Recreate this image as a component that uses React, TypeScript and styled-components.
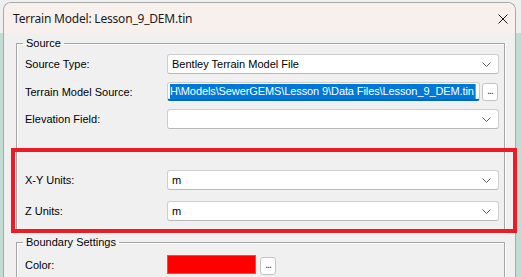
import React from 'react';
import styled, {createGlobalStyle} from 'styled-components';

const GlobalStyle = createGlobalStyle`
  html, body {
    margin: 0;
    padding: 0;
  }
  body {
    width: 521px;
    height: 277px;
    overflow: hidden;
    background: linear-gradient(to bottom, #eef0ef 0px, #eef0ef 33px, #c3dcd3 33px, #c3dcd3 100%);
    font-family: "Liberation Sans", Arial, sans-serif;
    font-size: 11px;
    color: #000;
  }
`

const Page = styled.div`
  position: relative;
  width: 521px;
  height: 277px;
  padding: 2px 0 0 3px;
  box-sizing: border-box;
  overflow: hidden;
`

const Window = styled.div`
  width: 513px;
  height: 275px;
  box-sizing: border-box;
  border: 1px solid #a9a9a9;
  border-bottom: none;
  border-radius: 8px 8px 0 0;
  background: #f0f0f0;
  overflow: hidden;
  display: flex;
  flex-direction: column;
`

const TitleBar = styled.div`
  height: 30px;
  flex: none;
  background: #f7f0ed;
  display: flex;
  align-items: center;
  justify-content: space-between;
  padding: 0 7px 0 9px;
  box-sizing: border-box;
`

const Title = styled.span`
  font-family: "Noto Sans", "Liberation Sans", sans-serif;
  font-size: 12px;
  color: #1b1b1b;
  letter-spacing: -0.2px;
  margin-top: 1px;
`

const CloseBtn = styled.div`
  width: 10px;
  height: 10px;
  display: flex;
  margin-top: 2px;
`

const Body = styled.div`
  flex: 1;
  padding: 4px 10px 0 12px;
  display: flex;
  flex-direction: column;
  gap: 3px;
`

const Group = styled.fieldset<{ $pb: number }>`
  margin: 0;
  padding: 4px 4px ${p => p.$pb}px 8px;
  border: 1px solid #a5a5a5;
  box-shadow: inset 1px 1px 0 #fff, 1px 1px 0 #fff;
  display: flex;
  flex-direction: column;
  min-width: 0;
`

const Legend = styled.legend`
  padding: 0 3px;
  margin-left: -2px;
  font-size: 11px;
  line-height: 13px;
  color: #000;
`

const Rows = styled.div<{ $gap: number; $mt?: number }>`
  display: flex;
  flex-direction: column;
  gap: ${p => p.$gap}px;
  margin-top: ${p => p.$mt || 0}px;
`

const Row = styled.div`
  display: flex;
  align-items: center;
`

const Label = styled.span`
  width: 142px;
  flex: none;
  white-space: nowrap;
`

const Dropdown = styled.div`
  width: 332px;
  height: 20px;
  box-sizing: border-box;
  background: #fff;
  border: 1px solid #cdcdcd;
  border-bottom-color: #b9b9b9;
  border-radius: 3px;
  display: flex;
  align-items: center;
  justify-content: space-between;
  padding: 0 7px 0 4px;
`

const Chevron = () => (
  <svg width="9" height="5" viewBox="0 0 9 5">
    <path d="M0.5 0.5 L4.5 4.5 L8.5 0.5" fill="none" stroke="#5f5f5f" strokeWidth="1" />
  </svg>
)

const TextField = styled.div`
  width: 313px;
  height: 19px;
  box-sizing: border-box;
  background: #fff;
  border: 1px solid #cdcdcd;
  border-bottom: 2px solid #0067c0;
  border-radius: 3px;
  padding: 1px 1px 0 2px;
  display: flex;
  overflow: hidden;
`

const Selected = styled.span`
  background: #0078d7;
  color: #fff;
  white-space: nowrap;
  height: 15px;
  line-height: 15px;
  padding-right: 1px;
  letter-spacing: -0.1px;
  border-right: 1px solid #e08a3c;
`

const DotsBtn = styled.div`
  width: 16px;
  height: 18px;
  box-sizing: border-box;
  margin-left: 2px;
  background: #fdfdfd;
  border: 1px solid #c4c4c4;
  border-radius: 3px;
  font-size: 10px;
  line-height: 14px;
  text-align: center;
  color: #222;
  letter-spacing: -1px;
`

const Swatch = styled.div<{ $color: string }>`
  width: 89px;
  height: 19px;
  box-sizing: border-box;
  border: 1px solid #7b7b7b;
  background: ${p => p.$color};
`

const ColorRow = styled(Row)`
  align-items: flex-start;
`

const Annotation = styled.div`
  position: absolute;
  left: 11px;
  top: 148px;
  width: 506px;
  height: 85px;
  box-sizing: border-box;
  border: 4px solid #ed1c24;
  pointer-events: none;
`

export default function App() {
  return (
    <Page>
      <GlobalStyle />
      <Window>
        <TitleBar>
          <Title>Terrain Model: Lesson_9_DEM.tin</Title>
          <CloseBtn>
            <svg width="10" height="10" viewBox="0 0 10 10">
              <path d="M0.5 0.5 L9.5 9.5 M9.5 0.5 L0.5 9.5" stroke="#1a1a1a" strokeWidth="1" />
            </svg>
          </CloseBtn>
        </TitleBar>
        <Body>
          <Group $pb={11}>
            <Legend>Source</Legend>
            <Rows $gap={8}>
              <Row>
                <Label>Source Type:</Label>
                <Dropdown>
                  <span>Bentley Terrain Model File</span>
                  <Chevron />
                </Dropdown>
              </Row>
              <Row>
                <Label>Terrain Model Source:</Label>
                <TextField>
                  <Selected>H\Models\SewerGEMS\Lesson 9\Data Files\Lesson_9_DEM.tin</Selected>
                </TextField>
                <DotsBtn>...</DotsBtn>
              </Row>
              <Row>
                <Label>Elevation Field:</Label>
                <Dropdown>
                  <span />
                  <Chevron />
                </Dropdown>
              </Row>
            </Rows>
            <Rows $gap={11} $mt={41}>
              <Row>
                <Label>X-Y Units:</Label>
                <Dropdown>
                  <span>m</span>
                  <Chevron />
                </Dropdown>
              </Row>
              <Row>
                <Label>Z Units:</Label>
                <Dropdown>
                  <span>m</span>
                  <Chevron />
                </Dropdown>
              </Row>
            </Rows>
          </Group>
          <Group $pb={6}>
            <Legend>Boundary Settings</Legend>
            <Rows $gap={8} $mt={2}>
              <ColorRow>
                <Label style={{paddingTop: 4}}>Color:</Label>
                <Swatch $color="#ff0000" />
                <DotsBtn style={{marginLeft: 4, marginTop: 2}}>...</DotsBtn>
              </ColorRow>
            </Rows>
          </Group>
        </Body>
      </Window>
      <Annotation />
    </Page>
  );
}
